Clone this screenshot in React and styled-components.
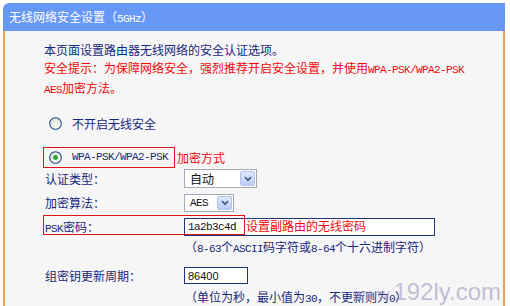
import styled, { createGlobalStyle } from "styled-components";

const GlobalStyle = createGlobalStyle`
  * { box-sizing: border-box; }
  html, body { margin: 0; padding: 0; background: #fff; }
  body {
    font-family: "Noto Sans CJK SC", sans-serif;
    font-size: 12px;
    text-autospace: no-autospace;
  }
`;

const NAVY = "#16287c";
const RED = "#f20a0a";
const MONO = '"Liberation Mono", monospace';

const Page = styled.div`
  position: relative;
  width: 510px;
  height: 306px;
  padding: 3px 5px 0 3px;
  overflow: hidden;
`;

const Header = styled.div`
  height: 28px;
  padding-left: 6px;
  background: #6898f6;
  border-top-left-radius: 6px;
  color: #fff;
  font-size: 12px;
  line-height: 28px;
  white-space: nowrap;
`;

const Panel = styled.div`
  height: 280px;
  padding: 10px 0 0 39px;
  background: #f6f6f6;
  border-left: 2px solid #eba44c;
  border-right: 2px solid #eba44c;
  color: ${NAVY};
  font-size: 12px;
`;

const Mono = styled.span`
  font-family: ${MONO};
  font-size: 11px;
  letter-spacing: -0.6px;
`;

const Intro = styled.div`
  line-height: 17.5px;
  white-space: nowrap;
`;

const Warning = styled.div`
  color: ${RED};
`;

const RadioRow = styled.div`
  display: flex;
  align-items: center;
  height: ${({ $h }) => $h || 20}px;
  margin-top: ${({ $mt }) => $mt || 0}px;
`;

const RadioBox = styled.div`
  display: flex;
  align-items: center;
  gap: 10px;
  height: 21px;
  width: ${({ $boxed }) => ($boxed ? "132px" : "auto")};
  margin-left: -1px;
  padding-left: 5px;
  border: 1px solid ${({ $boxed }) => ($boxed ? "#e01414" : "transparent")};
`;

const Note = styled.span`
  color: ${RED};
  margin-left: 2px;
  white-space: nowrap;
`;

const FieldRow = styled.div`
  position: relative;
  display: flex;
  align-items: center;
  height: ${({ $h }) => $h}px;
  margin-top: ${({ $mt }) => $mt}px;
`;

const Label = styled.div`
  width: 140px;
  padding-left: 1px;
  white-space: nowrap;
`;

const SelectBox = styled.div`
  display: flex;
  align-items: center;
  justify-content: space-between;
  width: ${({ $w }) => $w}px;
  height: ${({ $h }) => $h}px;
  padding: 0 1px 0 5px;
  background: #fff;
  border: 1px solid #a3abb6;
  color: #111;
  font-size: 12px;
`;

const SelectValue = styled.span`
  font-family: ${({ $mono }) => ($mono ? MONO : '"Noto Sans CJK SC", sans-serif')};
  font-size: ${({ $mono }) => ($mono ? 11 : 12)}px;
  letter-spacing: ${({ $mono }) => ($mono ? -0.6 : 0)}px;
`;

const ArrowButton = styled.div`
  display: flex;
  align-items: center;
  justify-content: center;
  width: 15px;
  height: calc(100% - 2px);
  background: linear-gradient(#dfe9fc, #b8cdf6);
  border: 1px solid #b0c3ea;
  border-radius: 2px;
`;

const TextInput = styled.input`
  width: ${({ $w }) => $w}px;
  height: ${({ $h }) => $h}px;
  margin: 0;
  padding: 0 0 0 3px;
  background: #fff;
  border: 1px solid #23337b;
  outline: none;
  color: #111;
  font-family: ${({ $mono }) => ($mono ? MONO : '"Liberation Sans", sans-serif')};
  font-size: 11px;
  letter-spacing: ${({ $mono }) => ($mono ? -0.6 : 0)}px;
`;

const Callout = styled.div`
  position: absolute;
  left: -1px;
  top: -2px;
  width: 202px;
  height: 20px;
  border: 1px solid #e01414;
  pointer-events: none;
`;

const CalloutText = styled.span`
  position: absolute;
  left: 202px;
  top: 0;
  line-height: 18px;
  color: ${RED};
  white-space: nowrap;
`;

const Hint = styled.div`
  padding-left: 141px;
  margin-top: ${({ $mt }) => $mt}px;
  line-height: 16px;
  white-space: nowrap;
`;

const Watermark = styled.div`
  position: absolute;
  right: 9px;
  top: 280px;
  font-family: "Liberation Sans", Arial, sans-serif;
  font-size: 24px;
  line-height: 24px;
  color: rgba(150, 140, 185, 0.55);
  white-space: nowrap;
  pointer-events: none;
`;

const Small = styled.span`
  font-size: 17px;
`;

function Radio({ checked }) {
  return (
    <svg width="13" height="13" viewBox="0 0 13 13">
      <defs>
        <linearGradient id="rg" x1="0" y1="0" x2="1" y2="1">
          <stop offset="0" stopColor="#dcdcd6" />
          <stop offset="1" stopColor="#ffffff" />
        </linearGradient>
      </defs>
      <circle cx="6.5" cy="6.5" r="5.8" fill="url(#rg)" stroke="#1f4b80" strokeWidth="1.1" />
      {checked && <circle cx="6.5" cy="6.5" r="2.4" fill="#24a524" />}
    </svg>
  );
}

function Chevron() {
  return (
    <svg width="8" height="6" viewBox="0 0 8 6">
      <path d="M1 1.2 L4 4.2 L7 1.2" fill="none" stroke="#4a5e86" strokeWidth="1.8" />
    </svg>
  );
}

function Select({ value, width, height, mono }) {
  return (
    <SelectBox $w={width} $h={height}>
      <SelectValue $mono={mono}>{value}</SelectValue>
      <ArrowButton>
        <Chevron />
      </ArrowButton>
    </SelectBox>
  );
}

export default function App() {
  return (
    <>
      <GlobalStyle />
      <Page>
        <Header>
          无线网络安全设置（<Mono>5GHz</Mono>）
        </Header>
        <Panel>
          <Intro>
            <div>本页面设置路由器无线网络的安全认证选项。</div>
            <Warning>
              安全提示：为保障网络安全，强烈推荐开启安全设置，并使用
              <Mono>WPA-PSK/WPA2-PSK</Mono>
              <br />
              <Mono>AES</Mono>加密方法。
            </Warning>
          </Intro>

          <RadioRow $mt={14}>
            <RadioBox>
              <Radio />
              <span>不开启无线安全</span>
            </RadioBox>
          </RadioRow>

          <RadioRow $mt={13} $h={21}>
            <RadioBox $boxed>
              <Radio checked />
              <Mono>WPA-PSK/WPA2-PSK</Mono>
            </RadioBox>
            <Note>加密方式</Note>
          </RadioRow>

          <FieldRow $h={20} $mt={1}>
            <Label>认证类型：</Label>
            <Select value="自动" width={73} height={19} />
          </FieldRow>

          <FieldRow $h={20} $mt={4}>
            <Label>加密算法：</Label>
            <Select value="AES" width={50} height={18} mono />
          </FieldRow>

          <FieldRow $h={20} $mt={4}>
            <Label>
              <Mono>PSK</Mono>密码：
            </Label>
            <TextInput $w={251} $h={18} $mono readOnly defaultValue="1a2b3c4d" />
            <Callout />
            <CalloutText>设置副路由的无线密码</CalloutText>
          </FieldRow>

          <Hint $mt={2}>
            （<Mono>8-63</Mono>个<Mono>ASCII</Mono>码字符或<Mono>8-64</Mono>个十六进制字符）
          </Hint>

          <FieldRow $h={18} $mt={10}>
            <Label>组密钥更新周期：</Label>
            <TextInput $w={64} $h={17} readOnly defaultValue="86400" />
          </FieldRow>

          <Hint $mt={4}>
            （单位为秒，最小值为<Mono>30</Mono>，不更新则为<Mono>0</Mono>）
          </Hint>
        </Panel>
        <Watermark>
          <Small>www.</Small>192ly.com
        </Watermark>
      </Page>
    </>
  );
}
